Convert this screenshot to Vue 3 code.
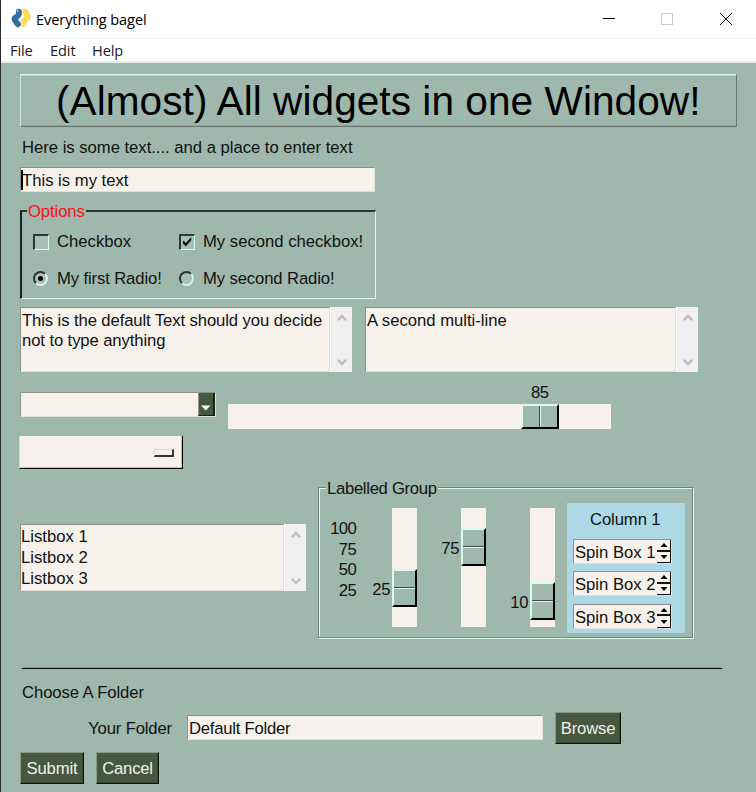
<script setup>
import { ref } from 'vue'

const menus = ['File', 'Edit', 'Help']
const multilines = [
  { cls: 'ml-a', lines: ['This is the default Text should you decide', 'not to type anything'] },
  { cls: 'ml-b', lines: ['A second multi-line'] },
]
const listItems = ['Listbox 1', 'Listbox 2', 'Listbox 3']
const ticks = [100, 75, 50, 25]
const sliders = ref([
  { value: 25, top: 61 },
  { value: 75, top: 20 },
  { value: 10, top: 74 },
])
const spins = ['Spin Box 1', 'Spin Box 2', 'Spin Box 3']
</script>

<template>
  <div class="window">
    <header class="titlebar">
      <svg class="logo" width="20" height="20" viewBox="0 0 20 20" fill="none" stroke-linecap="round" stroke-linejoin="round">
        <path d="M13.800 3.700C15.500 4.500 15.500 6.500 16.500 8.300C17.300 10.500 14.500 11.500 13 13C12.200 14 12.300 15 12 16.200" stroke="#ffd94f" stroke-width="6" />
        <path d="M8.200 3.800C8.600 6.500 8 7.500 6 8.800C3.500 10 3.300 11 4.300 12.500C5.300 14 6 15 7.400 16.200" stroke="#fff" stroke-width="6.800" />
        <path d="M7.900 3.700C8.200 6.500 7.600 7.500 5.800 8.500C3.500 9.500 3.200 11 4.300 12.500C5.300 14 5.700 15 6.900 16.200" stroke="#34709f" stroke-width="6" />
        <circle cx="6.700" cy="3" r=".8" fill="#fff" />
        <circle cx="13.300" cy="16.600" r=".8" fill="#fff" />
        <path d="M1.200 7.500l3-1.400M16.200 13.700l3-1.400" stroke="#fff" stroke-width=".8" />
      </svg>
      <span class="caption">Everything bagel</span>
      <svg class="controls" width="134" height="14" viewBox="0 0 134 14" fill="none" shape-rendering="crispEdges">
        <path d="M1 6.500h12" stroke="#000" />
        <rect x="59.500" y="1.500" width="11" height="11" stroke="#ccc" />
        <path d="M118 1l12 12M130 1l-12 12" stroke="#000" shape-rendering="auto" />
      </svg>
    </header>
    <nav class="menubar">
      <span v-for="m in menus" :key="m" :class="m.toLowerCase()">{{ m }}</span>
    </nav>

    <main class="body">
      <h1 class="heading"><span>(Almost) All widgets in one Window!</span></h1>
      <div class="intro">Here is some text.... and a place to enter text</div>
      <div class="field entry"><i class="caret"></i>This is my text</div>

      <section class="options">
        <span class="legend red">Options</span>
        <label><i class="check"></i>Checkbox</label>
        <label>
          <i class="check">
            <svg width="10" height="10" viewBox="0 0 10 10"><path d="M1 3.500v3l2.800 2.800L9.300 3.300v-3L3.800 6z" /></svg>
          </i>My second checkbox!
        </label>
        <label class="tight"><i class="radio"><b></b></i>My first Radio!</label>
        <label class="tight"><i class="radio"></i>My second Radio!</label>
      </section>

      <div class="row multis">
        <div v-for="m in multilines" :key="m.cls" class="scrollable" :class="m.cls">
          <div class="field area"><div v-for="l in m.lines" :key="l">{{ l }}</div></div>
          <div class="scrollbar">
            <svg width="10" height="8" viewBox="0 0 10 8"><path d="M.8 6.200L5 2l4.200 4.200" /></svg>
            <svg width="10" height="8" viewBox="0 0 10 8"><path d="M.8 1.800L5 6l4.200-4.200" /></svg>
          </div>
        </div>
      </div>

      <div class="row pickers">
        <div class="left">
          <div class="field combo">
            <span class="drop"><svg width="10" height="6" viewBox="0 0 10 6"><path d="M0 .5h9.500L4.800 5.500z" fill="#fff" /></svg></span>
          </div>
          <div class="optionmenu"><i></i></div>
        </div>
        <div class="hslider">
          <div class="hvalue">85</div>
          <div class="htrack"><div class="hthumb"><i></i><i></i></div></div>
        </div>
      </div>

      <div class="row lower">
        <div class="scrollable listbox">
          <div class="field area"><div v-for="l in listItems" :key="l">{{ l }}</div></div>
          <div class="scrollbar">
            <svg width="10" height="8" viewBox="0 0 10 8"><path d="M.8 6.200L5 2l4.200 4.200" /></svg>
            <svg width="10" height="8" viewBox="0 0 10 8"><path d="M.8 1.800L5 6l4.200-4.200" /></svg>
          </div>
        </div>
        <section class="group">
          <div class="groove"></div>
          <span class="legend">Labelled Group</span>
          <div class="ticks"><span v-for="t in ticks" :key="t">{{ t }}</span></div>
          <div v-for="s in sliders" :key="s.value" class="vslider">
            <div class="vlabel" :style="{ paddingTop: s.top + 'px' }"><span>{{ s.value }}</span></div>
            <div class="vtrack" :style="{ paddingTop: s.top + 'px' }"><div class="vthumb"><i></i><i></i></div></div>
          </div>
          <div class="column">
            <div class="coltitle">Column 1</div>
            <div v-for="s in spins" :key="s" class="spin">
              <span>{{ s }}</span>
              <div class="arrows">
                <i><svg width="8" height="4" viewBox="0 0 8 4"><path d="M4 0l3.500 4h-7z" /></svg></i>
                <i><svg width="8" height="4" viewBox="0 0 8 4"><path d="M4 4L.5 0h7z" /></svg></i>
              </div>
            </div>
          </div>
        </section>
      </div>

      <div class="separator"></div>
      <div class="choose">Choose A Folder</div>
      <div class="row folder">
        <span class="flabel">Your Folder</span>
        <div class="field finput">Default Folder</div>
        <button class="btn browse">Browse</button>
      </div>
      <div class="row actions">
        <button class="btn submit">Submit</button>
        <button class="btn cancel">Cancel</button>
      </div>
    </main>
  </div>
</template>

<style>
body { margin: 0; background: #9fb8ad; }
</style>

<style scoped>
* { box-sizing: border-box; }
.window {
  width: 756px;
  height: 792px;
  overflow: hidden;
  border-left: 1px solid #2b2c33;
  background: #9fb8ad;
  color: #111;
  font: 16.67px/20px "Liberation Sans", Arial, sans-serif;
  white-space: nowrap;
}
.row { display: flex; }
.titlebar {
  display: flex;
  align-items: center;
  height: 38px;
  padding-left: 10px;
  background: #fff;
  color: #000;
}
.logo { margin-top: -2px; }
.caption {
  margin-left: 5px;
  font: 14.600px/20px "Open Sans", sans-serif;
  letter-spacing: -0.100px;
}
.controls { margin: 0 20px 0 auto; }
.menubar {
  display: flex;
  height: 25px;
  border-top: 1px solid #f3f3f5;
  border-bottom: 2px solid #e8ecea;
  background: #fff;
  color: #1b1b24;
  font: 14.600px/22px "Open Sans", sans-serif;
  letter-spacing: -0.100px;
}
.menubar span { width: 42px; }
.menubar .file { width: 49px; padding-left: 9px; }

.body { padding-left: 19px; }
.heading {
  width: 717px;
  height: 53px;
  margin: 11px 0 0;
  padding-left: 35px;
  border: 1px solid;
  border-color: #d2f6e8 #67776f #67776f #c9eadc;
  box-shadow: inset 0 1px #b9d8cb, inset 0 -1px #8ea39a;
  color: #000;
  font-size: 40.600px;
  font-weight: 400;
  line-height: 53px;
  letter-spacing: 0.050px;
}
.intro { margin: 11px 0 0 2px; letter-spacing: -0.020px; }
.field {
  border: 1px solid;
  border-color: #8c918b #e3ded7 #e3ded7 #8c918b;
  padding-left: 1px;
  background: #f7f1eb;
}
.entry {
  position: relative;
  width: 355px;
  height: 25px;
  margin-top: 9px;
  line-height: 25px;
}
.caret { position: absolute; left: 0; top: 2px; width: 2px; height: 20px; background: #000; }

.options {
  position: relative;
  display: grid;
  grid-template-columns: 146px 1fr;
  grid-template-rows: 37px 37px;
  align-items: center;
  width: 356px;
  height: 89px;
  margin-top: 18px;
  padding: 11px 0 0 11px;
  border: solid;
  border-width: 2px 1px 1px 2px;
  border-color: #2f3734 #d9fcee #d9fcee #1d2220;
}
.options label { display: flex; align-items: center; }
.options .tight { letter-spacing: -0.120px; }
.legend {
  position: absolute;
  left: 6px;
  top: -10px;
  height: 20px;
  padding: 0 1px;
  background: #9fb8ad;
}
.red { left: 5px; color: #fa0f1b; letter-spacing: -0.100px; }
.check {
  width: 16px;
  height: 16px;
  margin-right: 8px;
  border: solid;
  border-width: 2px 1px 1px 2px;
  border-color: #2f3734 #d9fcee #d9fcee #2f3734;
  background: #a8c1b6;
}
.check svg { display: block; margin: 1px; }
.radio {
  display: flex;
  align-items: center;
  justify-content: center;
  width: 15px;
  height: 15px;
  margin-right: 9px;
  border: 2px solid;
  border-color: #2b322f #d4f6e8 #d4f6e8 #2b322f;
  border-radius: 50%;
  background: #a8c1b6;
}
.radio b { width: 5px; height: 5px; border-radius: 50%; background: #000; }

.multis { gap: 13px; margin-top: 8px; }
.scrollable { display: flex; height: 65px; }
.area { flex: 1; padding-top: 3px; }
.ml-a { width: 332px; letter-spacing: -0.100px; }
.ml-b { width: 333px; }
.scrollbar {
  display: flex;
  flex-direction: column;
  align-items: center;
  justify-content: space-between;
  width: 22px;
  padding: 7px 0 6px;
  border-left: 1px solid #fff;
  background: #f0f0f0;
}
.scrollbar path { fill: none; stroke: #c0c0c0; stroke-width: 2.600; }

.pickers { margin-top: 20px; }
.left { width: 208px; }
.combo { display: flex; justify-content: flex-end; width: 196px; height: 25px; }
.drop {
  display: flex;
  justify-content: center;
  align-items: flex-end;
  width: 17px;
  padding-bottom: 4px;
  border: solid #1c2119;
  border-width: 0 2px 1px 0;
  border-left: 1px solid #8c9787;
  background: #475841;
}
.optionmenu {
  display: flex;
  justify-content: flex-end;
  width: 164px;
  height: 33px;
  margin: 19px 0 0 -1px;
  padding: 13px 8px 0 0;
  border: solid #000;
  border-width: 0 1px 1px 0;
  border-left: 1px solid #d9d9d0;
  box-shadow: inset -1px -1px #c5c0ba;
  background: #f7f1eb;
}
.optionmenu i {
  width: 20px;
  height: 8px;
  border: solid;
  border-color: #ddd8d2 #35332f #35332f #ddd8d2;
  border-width: 1px 2px 2px 1px;
}
.hslider { width: 383px; margin-top: -9px; }
.hvalue { padding-left: 303px; letter-spacing: -0.400px; }
.htrack { height: 25px; margin-top: 1px; padding-left: 293px; background: #f7f1eb; }
.hthumb, .vthumb { display: flex; border: 2px solid; border-color: #d9fcee #000 #000 #d9fcee; background: #9fb8ad; }
.hthumb { width: 38px; height: 25px; }
.hthumb i { flex: 1; }
.hthumb i:first-child { border-right: 1px solid #3d4743; }
.hthumb i:last-child { border-left: 1px solid #d9fcee; }

.lower { margin-top: 18px; }
.listbox { width: 286px; height: 67px; margin-top: 37px; }
.listbox .area { padding: 1px 0 0; line-height: 21.200px; }
.group {
  position: relative;
  display: flex;
  width: 375px;
  height: 151px;
  margin-left: 12px;
}
.groove {
  position: absolute;
  inset: 0;
  border: 1px solid #71847b;
  box-shadow: inset 1px 1px #d9fcee, 1px 1px #d9fcee;
}
.group .legend { left: 8px; top: -8px; letter-spacing: -0.300px; }
.ticks {
  display: flex;
  flex-direction: column;
  width: 38px;
  padding-top: 31px;
  letter-spacing: -0.700px;
  text-align: right;
}
.ticks span { height: 20.700px; line-height: 21px; }
.vslider { display: flex; height: 119px; margin-top: 21px; }
.vlabel { width: 34px; letter-spacing: -0.400px; text-align: right; }
.vlabel span { display: block; margin-top: 11px; }
.vtrack { width: 25px; height: 119px; margin-left: 2px; background: #f7f1eb; }
.vslider + .vslider .vlabel { width: 42px; }
.vthumb { flex-direction: column; width: 25px; height: 38px; }
.vthumb i { flex: 1; }
.vthumb i:first-child { border-bottom: 1px solid #3d4743; }
.vthumb i:last-child { border-top: 1px solid #d9fcee; }
.column { width: 118px; height: 130px; margin: 16px 0 0 12px; padding-left: 6px; background: #add8e6; }
.coltitle { height: 36px; padding: 7px 0 0 17px; letter-spacing: -0.100px; }
.spin {
  display: flex;
  width: 99px;
  height: 25px;
  margin-bottom: 7.400px;
  padding-left: 1px;
  border: 1px solid;
  border-color: #8c918b #e3ded7 #e3ded7 #8c918b;
  background: #f7f1eb;
  line-height: 25px;
}
.spin span { width: 82px; }
.arrows { width: 14px; }
.arrows i {
  display: flex;
  align-items: center;
  justify-content: center;
  height: 11.500px;
  border: solid #111;
  border-width: 0 1px 1px 0;
}
.arrows i:first-child { border-bottom-width: 2px; }

.separator { width: 700px; height: 1px; margin: 30px 0 0 2px; background: #0c0f0e; box-shadow: 0 -1px #84988f; }
.choose { margin: 14px 0 0 2px; letter-spacing: -0.080px; }
.folder { height: 32px; margin-top: 9px; }
.flabel { width: 152px; line-height: 34px; letter-spacing: -0.150px; text-align: right; }
.finput { width: 356px; height: 25px; margin: 3px 12px 0 15px; line-height: 25px; letter-spacing: -0.240px; }
.btn {
  height: 32px;
  padding: 0;
  border: 1px solid;
  border-color: #8b9787 #10140e #10140e #8b9787;
  box-shadow: inset -1px -1px #36432f;
  background: #475841;
  color: #f0f0e8;
  font: inherit;
  line-height: 31px;
}
.browse { width: 66px; letter-spacing: -0.150px; }
.actions { gap: 12px; margin-top: 8px; }
.submit { width: 64px; letter-spacing: -0.100px; }
.cancel { width: 63px; letter-spacing: -0.200px; }
</style>
